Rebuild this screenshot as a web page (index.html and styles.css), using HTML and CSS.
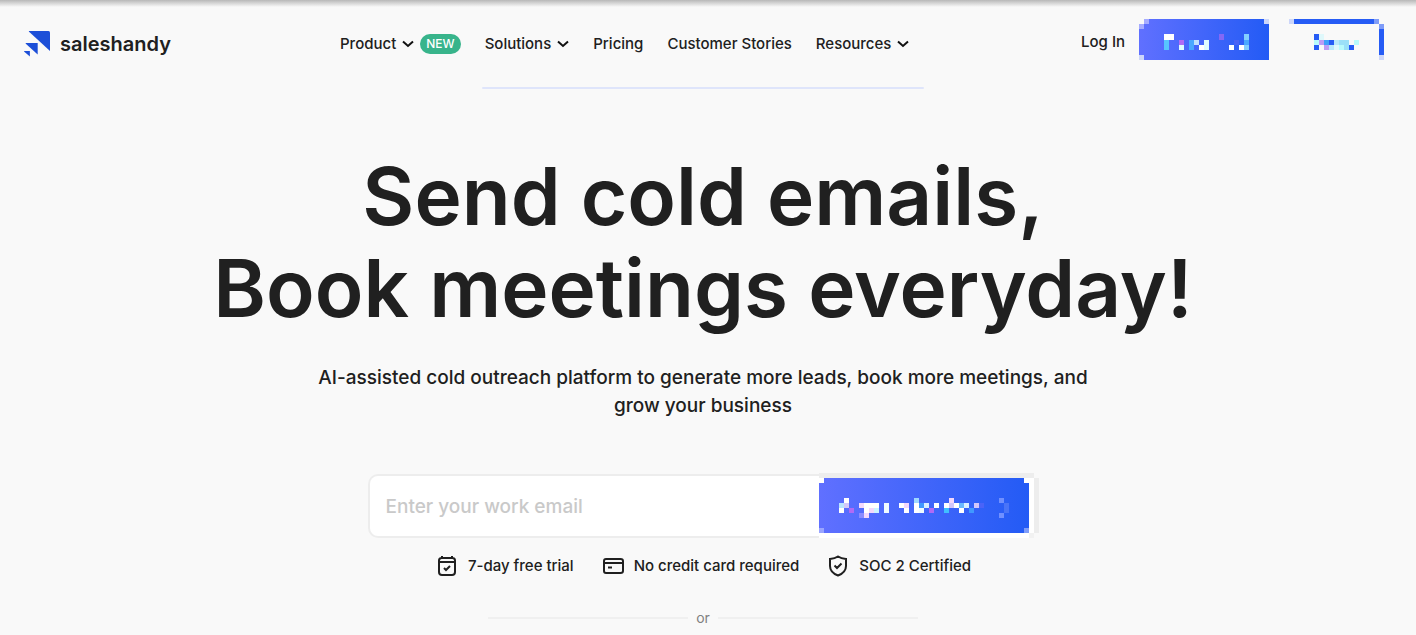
FILE: index.html
```html
<!DOCTYPE html>
<html lang="en">
<head>
<meta charset="utf-8">
<title>Saleshandy</title>
<meta name="viewport" content="width=device-width, initial-scale=1">
<link rel="stylesheet" href="styles.css">
</head>
<body>
<header class="header">
  <a class="brand" href="#">
    <svg class="brand-mark" width="28" height="28" viewBox="0 0 28 28" aria-hidden="true"><path d="M5 1H24.500Q26 1 26 2.500V21L4.800 1.600Z"/><path d="M2 13H13.700V24.500L1.500 13.600Z"/><path d="M.3 21H5.900V26.500L0 21.400Z"/></svg>
    <span>saleshandy</span>
  </a>
  <nav class="nav" aria-label="Main">
    <a class="nav-link" href="#">Product <svg class="chevron" viewBox="0 0 12 8"><path d="M1 1.500 6 6l5-4.500"/></svg><span class="tag">NEW</span></a>
    <a class="nav-link" href="#">Solutions <svg class="chevron" viewBox="0 0 12 8"><path d="M1 1.500 6 6l5-4.500"/></svg></a>
    <a class="nav-link" href="#">Pricing</a>
    <a class="nav-link" href="#">Customer Stories</a>
    <a class="nav-link" href="#">Resources <svg class="chevron" viewBox="0 0 12 8"><path d="M1 1.500 6 6l5-4.500"/></svg></a>
  </nav>
  <div class="account">
    <a class="login" href="#">Log In</a>
    <button class="mosaic-button" type="button" aria-label="Sign up"><svg class="mosaic" width="130" height="41" viewBox="0 0 26 8" preserveAspectRatio="none"><defs><linearGradient id="g1"><stop stop-color="#6070ff"/><stop offset="1" stop-color="#235bf5"/></linearGradient></defs><path fill="url(#g1)" d="M1 0H26V8H0V1H1Z"/><path fill="#a5abff" d="M1 0h1v1H1zM0 1h1v1H0z"/><path fill="#ccd6fa" d="M25 0h1v1h-1zM0 7h1v1H0z"/><path fill="#fff" d="M5 3h2v1H5zM12 5h1v1h-1zM18 5h1v1h-1zM20 5h1v1h-1z"/><path fill="#57c5ff" d="M5 4h1v2H5z"/><path fill="#b06af5" d="M8 4h1v1H8z"/><path fill="#8468f5" d="M16 3h1v1h-1z"/><path fill="#dffcff" d="M8 5h1v1H8zM13 4h1v2h-1z"/><path fill="#49a8ff" d="M10 4h1v2h-1zM21 4h1v1h-1z"/><path fill="#bfe0ff" d="M11 4h1v1h-1z"/><path fill="#4a63f5" d="M19 4h1v1h-1z"/><path fill="#83cfff" d="M21 3h1v1h-1zM21 5h1v1h-1z"/></svg></button>
    <button class="mosaic-button" type="button" aria-label="Book a demo"><svg class="mosaic" width="95" height="41" viewBox="0 0 19 8" preserveAspectRatio="none"><path fill="#265cf5" d="M1 0h16v1H1zM18 2h1v5h-1zM5 3h1v1H5zM5 5h1v1H5zM8 4h1v1H8zM12 5h1v1h-1z"/><path fill="#7f9cf8" d="M17 0h1v1h-1zM18 1h1v1h-1z"/><path fill="#ccd6fa" d="M0 0h1v1H0zM18 7h1v1h-1z"/><path fill="#dff8fb" d="M6 3h1v1H6zM9 5h1v1H9z"/><path fill="#b8fafc" d="M5 4h1v1H5zM13 4h1v1h-1zM10 5h1v1h-1z"/><path fill="#bd9cf5" d="M6 4h1v1H6zM7 5h1v1H7z"/><path fill="#3fa0fa" d="M7 4h1v1H7z"/><path fill="#b8e8fb" d="M9 4h1v1H9zM8 5h1v1H8z"/><path fill="#9be0f8" d="M10 4h2v1h-2zM11 5h1v1h-1z"/></svg></button>
  </div>
</header>
<main class="hero">
  <div class="accent-line"></div>
  <h1 class="title">Send cold emails,<br>Book meetings everyday!</h1>
  <p class="lead">AI-assisted cold outreach platform to generate more leads, book more meetings, and grow your business</p>
  <form class="signup">
    <input class="email" type="email" placeholder="Enter your work email" aria-label="Work email">
    <button class="mosaic-button" type="submit" aria-label="Sign up for free"><svg class="mosaic" width="220" height="65" viewBox="0 0 44 13"><defs><linearGradient id="g2"><stop stop-color="#6070ff"/><stop offset="1" stop-color="#235bf5"/></linearGradient></defs><path fill="#ededed" d="M0 0h43v1H0zM43 1h1v11h-1z"/><path fill="#f2f2f2" d="M42 12h1v1h-1z"/><path fill="#fff" d="M0 1h43v11H42v1H0z"/><path fill="url(#g2)" d="M1 1H41V2H42V12H0V2H1Z"/><path fill="#9aa5ff" d="M0 11h1v1H0z"/><path fill="#7f9cf8" d="M41 11h1v1h-1z"/><path fill="#fff" d="M5 5h1v1H5zM9 6h3v1H9zM16 6h1v1h-1zM19 6h1v2h-1zM23 6h1v1h-1zM25 6h1v1h-1zM27 6h1v1h-1zM4 7h1v1H4zM9 7h1v1H9zM17 7h1v1h-1zM28 7h1v1h-1z"/><path fill="#f0fcff" d="M13 6h1v2h-1zM20 7h1v1h-1z"/><path fill="#9fd8ff" d="M19 5h1v1h-1z"/><path fill="#b8e4ff" d="M4 6h1v1H4z"/><path fill="#d2c6fa" d="M5 6h1v1H5zM26 6h1v1h-1zM31 6h1v1h-1z"/><path fill="#f3d8fc" d="M8 6h1v1H8zM17 6h1v1h-1zM10 7h1v1h-1zM9 8h1v1H9zM26 5h1v1h-1z"/><path fill="#b06af5" d="M6 7h1v1H6zM22 7h1v1h-1z"/><path fill="#ccf4ff" d="M11 7h1v1h-1z"/><path fill="#8a8cff" d="M8 8h1v1H8z"/><path fill="#4098ff" d="M20 6h1v1h-1zM30 7h1v1h-1z"/><path fill="#d8eeff" d="M21 6h1v1h-1zM29 6h1v1h-1z"/><path fill="#68b8ff" d="M28 6h1v1h-1z"/><path fill="#40bfff" d="M25 7h1v1h-1z"/><path fill="#4a63f8" d="M32 6h1v1h-1z"/><path fill="#7090ff" d="M36 5h1v1h-1zM36 8h1v1h-1z"/><path fill="#4a74f8" d="M37 6h1v2h-1z"/></svg></button>
  </form>
  <ul class="perks">
    <li class="perk"><svg class="perk-icon" viewBox="0 0 24 24"><path d="M4 6.500Q4 4 6.500 4h11Q20 4 20 6.500V18q0 3-3 3H7q-3 0-3-3ZM4 8h16M7 2v2M17 2v2M9 14l2 2 4-4"/></svg>7-day free trial</li>
    <li class="perk"><svg class="perk-icon" viewBox="0 0 24 24"><path d="M5 5h14.500Q22 5 22 7v10q0 2-2.500 2H5Q3 19 3 17V7Q3 5 5 5ZM3 9h19M7 13.500h4"/></svg>No credit card required</li>
    <li class="perk"><svg class="perk-icon" viewBox="0 0 24 24"><path d="M12 2.500Q15 4.500 20 5V12q0 6.500-8 9.500Q4 18.500 4 12V5Q9 4.500 12 2.500ZM8.500 11.500l2.500 2.500 4.500-4.500"/></svg>SOC 2 Certified</li>
  </ul>
  <div class="divider">or</div>
</main>
</body>
</html>
```
FILE: styles.css
```css
* { box-sizing: border-box; }
body { margin: 0; background: #f9f9f9; color: #202020; font-family: Inter, "Liberation Sans", sans-serif; font-size: 15px; font-weight: 500; }
a { color: inherit; text-decoration: none; }
.header { display: grid; grid-template-columns: minmax(160px, 316px) auto 1fr; align-items: center; height: 87px; padding: 0 32px 0 24px; background: linear-gradient(#b8b8b8, #f9f9f9 7px); }
.brand { display: flex; align-items: center; gap: 8px; font-size: 20px; font-weight: 600; }
.brand-mark { fill: #1d4fd8; }
.nav { display: flex; gap: 24px; }
.nav-link { display: flex; align-items: center; gap: 6px; }
.chevron { width: 12px; height: 8px; fill: none; stroke: #111; stroke-width: 2; }
.tag { padding: 0 6px; border-radius: 10px; background: #38b48b; color: #fff; font-size: 12px; font-weight: 500; line-height: 20px; }
.account { display: flex; align-items: flex-start; align-self: start; justify-content: flex-end; padding-top: 19px; }
.login { margin-right: 14px; line-height: 46px; }
.mosaic-button { display: block; padding: 0; border: 0; background: none; }
.mosaic-button + .mosaic-button { margin-left: 20px; }
.mosaic { display: block; shape-rendering: crispEdges; }
.hero { display: flex; flex-direction: column; align-items: center; padding-right: 10px; }
.accent-line { width: 442px; height: 2px; background: #dfe5fb; border-radius: 2px; }
.title { margin: 61px 0 0; font-size: 80px; font-weight: 600; line-height: 92px; text-align: center; }
.lead { max-width: 800px; margin: 30px 0 0; font-size: 19px; line-height: 28px; text-align: center; }
.signup { display: flex; align-items: center; margin: 53px 0 0; }
.email { width: 451px; height: 64px; padding: 2px 16px 0; border: 2px solid #ededed; border-right: 0; border-radius: 10px 0 0 10px; background: #fff; font: inherit; font-size: 19px; }
.email::placeholder { color: #c9c9c9; }
.perks { display: flex; gap: 27px; margin: 16px 0 0; padding: 0; list-style: none; }
.perk { display: flex; align-items: center; gap: 9px; line-height: 24px; }
.perk-icon { width: 24px; height: 24px; fill: none; stroke: #202020; stroke-width: 2; }
.divider { display: flex; align-items: center; gap: 8px; width: 430px; margin: 30px 0 0; color: #808080; font-size: 14px; font-weight: 400; line-height: 20px; }
.divider::before, .divider::after { content: ""; flex: 1; height: 2px; background: #f0f0f0; }
```
